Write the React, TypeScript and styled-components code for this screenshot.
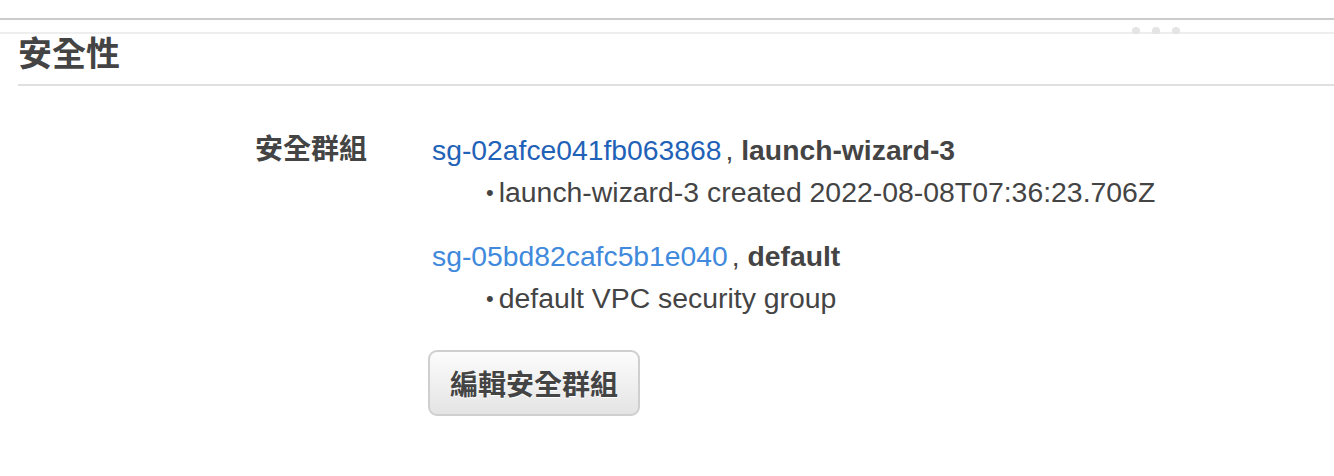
import React from "react";
import styled, { createGlobalStyle } from "styled-components";

const Global = createGlobalStyle`
  html, body { margin: 0; padding: 0; background: #fff; }
  body { font-family: "Liberation Sans", "Noto Sans CJK TC", Arial, sans-serif; color: #444; }
`;

const Page = styled.div`
  width: 1334px;
  height: 476px;
  overflow: hidden;
  background: #fff;
`;

const TopRule = styled.div`
  margin-top: 18px;
  height: 2px;
  background: #cbcbcb;
`;

const SplitBar = styled.div`
  position: relative;
  margin-top: 12px;
  height: 2px;
  background: #eeeeee;
`;

const Grip = styled.div`
  position: absolute;
  left: 1132px;
  top: -5px;
  display: flex;
  gap: 12px;
`;

const GripDot = styled.span`
  width: 8px;
  height: 7px;
  border-radius: 4px 4px 2px 2px;
  background: #e4e4e4;
`;

const Section = styled.section`
  padding-left: 18px;
`;

const Header = styled.h2`
  margin: 0;
  font-size: 34px;
  line-height: 40px;
  font-weight: bold;
  color: #444;
  padding-bottom: 10px;
  border-bottom: 2px solid #e0e0e0;
`;

const Body = styled.div`
  display: grid;
  grid-template-columns: 349px 1fr;
  column-gap: 65px;
  padding-top: 44px;
`;

const Label = styled.div`
  text-align: right;
  font-size: 28px;
  line-height: 40px;
  font-weight: bold;
  color: #444;
`;

const Values = styled.div`
  display: flex;
  flex-direction: column;
  align-items: flex-start;
`;

const Group = styled.div`
  & + & {
    margin-top: 23px;
  }
`;

const GroupLine = styled.div`
  font-size: 28.3px;
  line-height: 40px;
  white-space: nowrap;
`;

const SgLink = styled.a<{ $visited?: boolean }>`
  color: ${(p) => (p.$visited ? "#1f62b7" : "#4089dc")};
  text-decoration: none;
  margin-right: 4px;
`;

const GroupName = styled.b`
  color: #444;
  font-weight: bold;
`;

const Desc = styled.div`
  margin-top: 2px;
  font-size: 28.4px;
  line-height: 40px;
  padding-left: 54px;
  color: #444;
  white-space: nowrap;
`;

const Bullet = styled.span`
  font-size: 22px;
  margin-right: 5px;
  vertical-align: 2px;
`;

const Button = styled.button`
  margin-top: 31px;
  margin-left: -4px;
  height: 66px;
  padding: 0 20px;
  border: 2px solid #cfcfcf;
  border-radius: 9px;
  background: linear-gradient(#fcfcfc, #e4e4e4);
  font-family: inherit;
  font-size: 28px;
  font-weight: bold;
  color: #444;
  text-shadow: 0 1px 0 #fff;
  cursor: pointer;
`;

const groups = [
  {
    id: "sg-02afce041fb063868",
    name: "launch-wizard-3",
    desc: "launch-wizard-3 created 2022-08-08T07:36:23.706Z",
    visited: true,
  },
  {
    id: "sg-05bd82cafc5b1e040",
    name: "default",
    desc: "default VPC security group",
    visited: false,
  },
];

export default function App() {
  return (
    <Page>
      <Global />
      <TopRule />
      <SplitBar>
        <Grip>
          <GripDot />
          <GripDot />
          <GripDot />
        </Grip>
      </SplitBar>
      <Section>
        <Header>安全性</Header>
        <Body>
          <Label>安全群組</Label>
          <Values>
            {groups.map((g) => (
              <Group key={g.id}>
                <GroupLine>
                  <SgLink href="#" $visited={g.visited}>
                    {g.id}
                  </SgLink>
                  , <GroupName>{g.name}</GroupName>
                </GroupLine>
                <Desc>
                  <Bullet>•</Bullet>
                  {g.desc}
                </Desc>
              </Group>
            ))}
            <Button>編輯安全群組</Button>
          </Values>
        </Body>
      </Section>
    </Page>
  );
}
